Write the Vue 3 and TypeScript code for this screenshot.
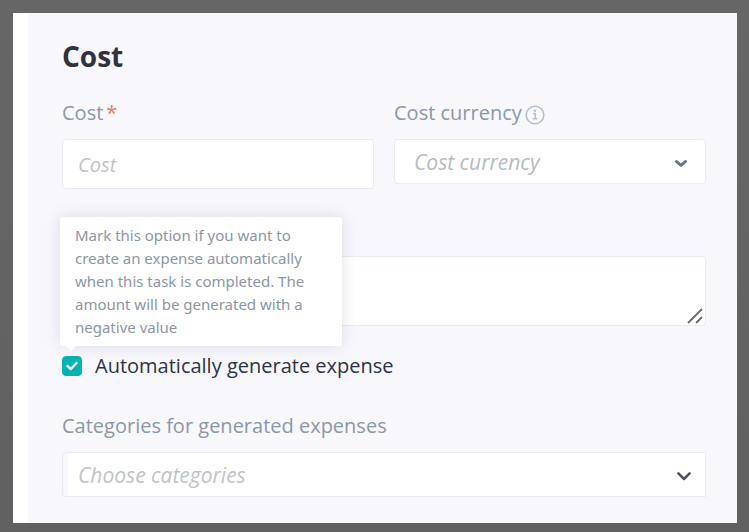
<script setup lang="ts">
import { ref } from 'vue'

const cost = ref('')
const currency = ref('')
const notes = ref('')
const autoExpense = ref(true)
const category = ref('')

const currencies: string[] = ['EUR', 'USD', 'GBP']
const categories: string[] = ['Travel', 'Materials', 'Services']
</script>

<template>
  <main class="backdrop">
    <form class="dialog" @submit.prevent>
      <h2 class="title">Cost</h2>

      <div class="row">
        <div class="field">
          <label class="label" for="cost">Cost<span class="required">*</span></label>
          <input id="cost" v-model="cost" class="control input" type="text" placeholder="Cost" />
        </div>
        <div class="field">
          <label class="label" for="currency">
            Cost currency
            <svg class="info" viewBox="0 0 20 20" aria-hidden="true">
              <circle cx="10" cy="10" r="8.8" fill="none" stroke="currentColor" stroke-width="1.6" />
              <path d="M8 8.6h2.3v5M7.8 13.8h4.6" fill="none" stroke="currentColor" stroke-width="1.6" />
              <circle cx="10" cy="5.8" r="1.2" fill="currentColor" />
            </svg>
          </label>
          <div class="select-wrap">
            <select id="currency" v-model="currency" class="control select">
              <option value="" disabled hidden>Cost currency</option>
              <option v-for="c in currencies" :key="c" :value="c">{{ c }}</option>
            </select>
            <svg class="chevron" viewBox="0 0 16 16" aria-hidden="true">
              <path d="M3.4 6.4 8 10.4 12.6 6.4" />
            </svg>
          </div>
        </div>
      </div>

      <div class="notes-wrap">
        <textarea v-model="notes" class="control notes" aria-label="Cost notes"></textarea>
        <svg class="grip" viewBox="0 0 16 16" aria-hidden="true">
          <path d="M1 15 15 1M9 15 15 9" />
        </svg>
      </div>

      <div class="check-row">
        <input
          id="auto"
          v-model="autoExpense"
          class="checkbox"
          type="checkbox"
          aria-describedby="auto-tip"
        />
        <svg v-if="autoExpense" class="tick" viewBox="0 0 20 20" aria-hidden="true">
          <path d="M5.4 10 8.8 13 14.6 7" />
        </svg>
        <label class="check-label" for="auto">Automatically generate expense</label>
        <div id="auto-tip" class="tooltip" role="tooltip">
          Mark this option if you want to create an expense automatically when this task is
          completed. The amount will be generated with a negative value
        </div>
      </div>

      <div class="field">
        <label class="label" for="categories">Categories for generated expenses</label>
        <div class="select-wrap">
          <select id="categories" v-model="category" class="control select categories">
            <option value="" disabled hidden>Choose categories</option>
            <option v-for="c in categories" :key="c" :value="c">{{ c }}</option>
          </select>
          <svg class="chevron dark" viewBox="0 0 16 16" aria-hidden="true">
            <path d="M2.4 5.4 8 11 13.6 5.4" />
          </svg>
        </div>
      </div>
    </form>
  </main>
</template>

<style>
body {
  margin: 0;
  background: #636363;
}
</style>

<style scoped>
* {
  box-sizing: border-box;
}
.backdrop {
  min-height: 100vh;
  padding: 13px 12px 9px 13px;
  background: linear-gradient(#666666, #606060);
  font-family: 'Open Sans', 'Noto Sans', sans-serif;
  font-size: 20px;
  line-height: 28px;
  color: #8c98aa;
}
.dialog {
  padding: 24px 31px 26px 34px;
  border-left: 15px solid #ffffff;
  background: #f7f7fc;
}
.title {
  margin: 0 0 24px;
  font-size: 28px;
  line-height: 38px;
  font-weight: 700;
  color: #2f333e;
}
.row {
  display: grid;
  grid-template-columns: 1fr 1fr;
  align-items: start;
  gap: 20px;
}
.field {
  display: flex;
  flex-direction: column;
  gap: 12px;
}
.label {
  display: flex;
  align-items: center;
}
.required {
  margin-left: 3px;
  color: #ff7467;
}
.info {
  width: 20px;
  height: 20px;
  margin: 4px 0 0 3px;
  color: #b9bfca;
}
.control {
  display: block;
  width: 100%;
  margin: 0;
  border: 1px solid #e8eaf4;
  border-radius: 4px;
  background: #ffffff;
  font: inherit;
  color: #b6bcc8;
  outline: none;
}
.input {
  height: 50px;
  padding: 0 15px;
  font-size: 20px;
  font-style: italic;
}
.input::placeholder {
  color: #c0c3ca;
  opacity: 1;
}
.select-wrap {
  position: relative;
}
.select {
  height: 45px;
  padding: 0 48px 0 19px;
  appearance: none;
  font-size: 21px;
  font-style: italic;
}
.categories {
  padding-left: 15px;
  border-radius: 4px 0 0 4px;
  background: linear-gradient(90deg, #f7f7fc 5px, #ffffff 5px);
  color: #c0c3ca;
}
.chevron {
  position: absolute;
  top: 16px;
  right: 17px;
  width: 16px;
  height: 16px;
  fill: none;
  stroke: #69758c;
  stroke-width: 2.8;
  stroke-linecap: round;
  stroke-linejoin: round;
  pointer-events: none;
}
.chevron.dark {
  right: 14px;
  stroke: #50535f;
  stroke-width: 2.5;
}
.notes-wrap {
  position: relative;
  margin-top: 67px;
}
.notes {
  height: 70px;
  padding: 8px 16px;
  resize: none;
}
.grip {
  position: absolute;
  right: 3px;
  bottom: 2px;
  width: 16px;
  height: 16px;
  fill: none;
  stroke: #6c6c6c;
  stroke-width: 1.8;
  pointer-events: none;
}
.check-row {
  position: relative;
  display: flex;
  align-items: center;
  gap: 13px;
  margin: 26px 0 32px;
  color: #2c3448;
}
.checkbox {
  width: 20px;
  height: 20px;
  margin: 0;
  appearance: none;
  border: 1px solid #c5cad6;
  border-radius: 4px;
  background: #ffffff;
}
.checkbox:checked {
  border-color: #00b3b3;
  background: #00b3b3;
}
.tick {
  position: absolute;
  left: 0;
  width: 20px;
  height: 20px;
  fill: none;
  stroke: #ffffff;
  stroke-width: 2.4;
  stroke-linecap: round;
  stroke-linejoin: round;
  pointer-events: none;
}
.tooltip {
  position: absolute;
  bottom: 34px;
  left: -2px;
  width: 282px;
  padding: 7px 15px;
  border-radius: 3px;
  background: #ffffff;
  box-shadow: 0 0 16px rgba(50, 60, 90, 0.14);
  font-family: 'Noto Sans', 'Open Sans', sans-serif;
  font-size: 15px;
  line-height: 23px;
  color: #8c96a8;
}
.tooltip::after {
  content: '';
  position: absolute;
  top: 100%;
  left: 6px;
  border: 5px solid transparent;
  border-top-color: #ffffff;
  border-bottom-width: 0;
}
</style>
